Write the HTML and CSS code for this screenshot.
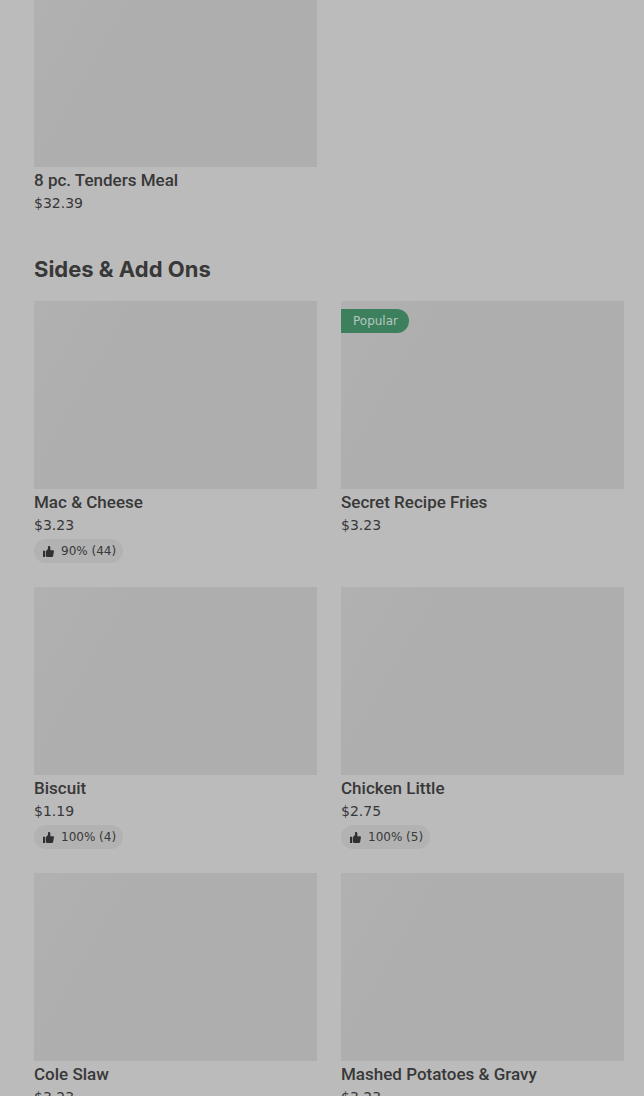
FILE: index.html
```
<!DOCTYPE html>
<html lang="en">
<head>
    <meta charset="UTF-8">
    <meta name="viewport" content="width=device-width, initial-scale=1.0">
    <title>Menu - Sides &amp; Add Ons</title>
    <link rel="stylesheet" href="styles.css">
</head>
<body>
    <svg width="0" height="0" class="sprite" aria-hidden="true">
        <symbol id="thumb-up" viewBox="0 0 12 12">
            <path d="M0 5.2h2.2V12H0z M3 5.6 5.4 3.4V1.2C5.4.4 5.9 0 6.6 0 7.5 0 8 .6 8 1.5V4.6H11.2L12 5.4 11 11.2 10 12H4.2L3 11.3z"/>
        </symbol>
    </svg>

    <main class="menu">
        <section class="grid">
            <article class="item">
                <div class="photo photo-cut"></div>
                <h3 class="name">8 pc. Tenders Meal</h3>
                <p class="price">$32.39</p>
            </article>
        </section>

        <h2 class="section-title">Sides &amp; Add Ons</h2>
        <section class="grid">
            <article class="item">
                <div class="photo"></div>
                <h3 class="name">Mac &amp; Cheese</h3>
                <p class="price">$3.23</p>
                <div class="rating"><svg class="thumb"><use href="#thumb-up"/></svg>90% (44)</div>
            </article>
            <article class="item">
                <div class="photo"><span class="popular">Popular</span></div>
                <h3 class="name">Secret Recipe Fries</h3>
                <p class="price">$3.23</p>
            </article>
            <article class="item">
                <div class="photo"></div>
                <h3 class="name">Biscuit</h3>
                <p class="price">$1.19</p>
                <div class="rating"><svg class="thumb"><use href="#thumb-up"/></svg>100% (4)</div>
            </article>
            <article class="item">
                <div class="photo"></div>
                <h3 class="name">Chicken Little</h3>
                <p class="price">$2.75</p>
                <div class="rating"><svg class="thumb"><use href="#thumb-up"/></svg>100% (5)</div>
            </article>
            <article class="item">
                <div class="photo"></div>
                <h3 class="name">Cole Slaw</h3>
                <p class="price">$3.23</p>
            </article>
            <article class="item">
                <div class="photo"></div>
                <h3 class="name">Mashed Potatoes &amp; Gravy</h3>
                <p class="price">$3.23</p>
            </article>
        </section>
    </main>
</body>
</html>
```
FILE: styles.css
```
* { box-sizing: border-box; }
body {
    margin: 0;
    background: #bbb;
    color: #383838;
    font-family: "DejaVu Sans", sans-serif;
}
.sprite { display: block; }
.menu {
    height: 100vh;
    overflow: hidden;
    padding: 0 20px 0 34px;
}
.grid {
    display: grid;
    grid-template-columns: 1fr 1fr;
    gap: 24px;
}
.photo {
    aspect-ratio: 283 / 188;
    padding-top: 8px;
    background: linear-gradient(120deg, #b1b1b1, #aeaeae 30%, #aeaeae);
}
/* first row is scrolled partly out of view */
.photo-cut { aspect-ratio: 283 / 167; }
.name {
    margin: 1px 0;
    font: 500 17px/24px Roboto, sans-serif;
}
.price {
    margin: 0;
    font-size: 14px;
    line-height: 20px;
}
.rating {
    display: inline-flex;
    align-items: center;
    gap: 7px;
    height: 24px;
    margin-top: 4px;
    padding: 0 7px 0 9px;
    border-radius: 12px;
    background: #b2b2b2;
    font-size: 12px;
    vertical-align: top;
}
.thumb {
    width: 11px;
    height: 11px;
    fill: #303030;
}
.popular {
    display: inline-block;
    padding: 0 11px 0 12px;
    border-radius: 0 12px 12px 0;
    background: #3d805e;
    color: #b8c6be;
    font-size: 12px;
    line-height: 24px;
    vertical-align: top;
}
.section-title {
    margin: 40px 0 16px;
    font: 700 22px/32px Inter, sans-serif;
}
```
